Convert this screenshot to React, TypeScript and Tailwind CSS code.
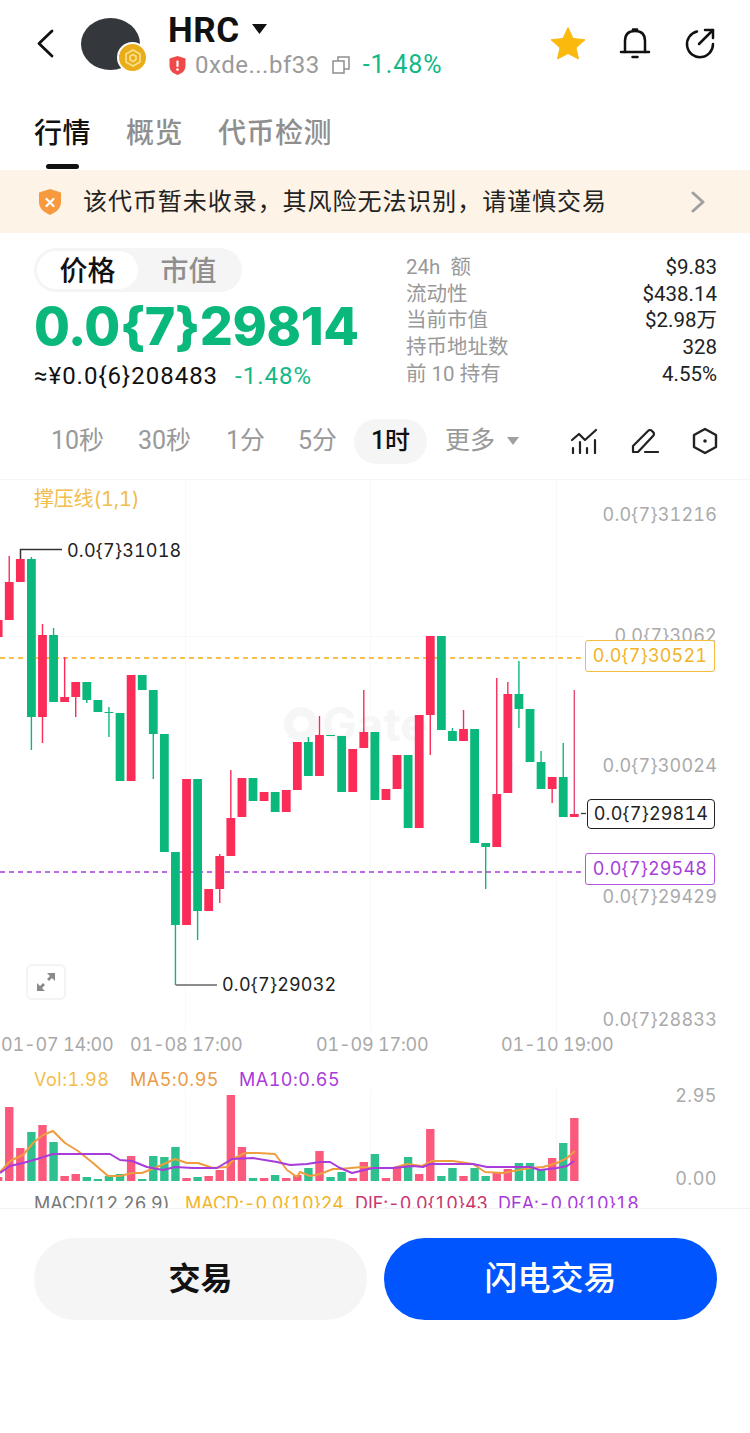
const FONT = "font-['Inter','Noto_Sans_CJK_SC',sans-serif]";

const GREEN = "#0bb87b";
const RED = "#fb2c57";

// [index, up, bodyTop, bodyBottom, wickTop, wickBottom]
const candles: [number, boolean, number, number, number?, number?][] = [
  [-3, true, 620, 637],
  [-2, true, 582, 620, 556],
  [-1, true, 559, 582],
  [0, false, 559, 717, 557, 750],
  [1, true, 635, 717, 624, 743],
  [2, false, 635, 702, 628],
  [3, true, 697, 702, 657],
  [4, true, 682, 697, undefined, 717],
  [5, false, 682, 700, undefined, 703],
  [6, false, 700, 712],
  [7, false, 712, 713, 707, 737],
  [8, false, 713, 781],
  [9, true, 675, 781],
  [10, false, 675, 690],
  [11, false, 690, 734, undefined, 779],
  [12, false, 734, 852],
  [13, false, 852, 925, undefined, 985],
  [14, true, 779, 925],
  [15, false, 779, 911, undefined, 940],
  [16, true, 889, 911],
  [17, true, 856, 889, 854, 903],
  [18, true, 818, 856, 770],
  [19, true, 778, 817],
  [20, false, 778, 801],
  [21, true, 792, 801],
  [22, false, 792, 812],
  [23, true, 790, 812],
  [24, true, 742, 790],
  [25, false, 742, 776, 737],
  [26, true, 735, 776, 716],
  [27, false, 735, 736],
  [28, false, 736, 792],
  [29, true, 749, 792],
  [30, true, 732, 748, 690],
  [31, false, 732, 800],
  [32, true, 789, 800],
  [33, true, 755, 789],
  [34, false, 755, 828],
  [35, true, 715, 828],
  [36, true, 636, 715, undefined, 755],
  [37, false, 636, 730],
  [38, false, 731, 741, 728],
  [39, true, 729, 741, 710],
  [40, false, 729, 843],
  [41, false, 843, 847, undefined, 889],
  [42, true, 794, 847, 678],
  [43, true, 694, 793, 682],
  [44, false, 694, 709, 661, 728],
  [45, false, 709, 762],
  [46, false, 762, 789, 751],
  [47, true, 777, 789, undefined, 803],
  [48, false, 777, 817, 743],
  [49, true, 814, 817, 690],
];

// [index, up, top]
const volumes: [number, boolean, number][] = [
  [-3, true, 1177], [-2, true, 1107], [-1, true, 1148], [0, false, 1132], [1, true, 1125], [2, false, 1142],
  [3, true, 1176], [4, true, 1174], [5, false, 1177], [6, false, 1179], [7, false, 1176], [8, false, 1174],
  [9, true, 1156], [10, false, 1179], [11, false, 1156], [12, false, 1157], [13, false, 1147], [14, true, 1178],
  [15, false, 1177], [16, true, 1176], [17, true, 1170], [18, true, 1095], [19, true, 1147], [20, false, 1178],
  [21, true, 1178], [22, false, 1175], [23, true, 1178], [24, true, 1175], [25, false, 1168], [26, true, 1151],
  [27, false, 1177], [28, false, 1172], [29, true, 1178], [30, true, 1162], [31, false, 1154], [32, true, 1178],
  [33, true, 1168], [34, false, 1157], [35, true, 1174], [36, true, 1129], [37, false, 1176], [38, false, 1168],
  [39, true, 1176], [40, false, 1168], [41, false, 1176], [42, true, 1172], [43, true, 1169], [44, false, 1163],
  [45, false, 1163], [46, false, 1170], [47, true, 1158], [48, false, 1143], [49, true, 1118],
];

const ma5 = "0,1172 10,1161 23,1155 33,1143 43,1135 53,1131 65,1143 78,1151 93,1163 108,1176 120,1176 132,1173 142,1173 157,1167 175,1159 187,1163 198,1163 213,1168 227,1167 235,1158 245,1153 258,1153 275,1154 287,1170 297,1177 300,1172 310,1176 320,1174 333,1169 340,1169 362,1167 373,1168 393,1168 407,1164 422,1166 432,1161 453,1161 473,1164 485,1172 503,1173 530,1168 543,1167 557,1163 567,1158 575,1151";
const ma10 = "0,1173 10,1166 23,1163 37,1159 53,1154 73,1154 110,1154 120,1160 132,1161 147,1167 163,1170 175,1167 193,1168 217,1168 232,1159 253,1158 277,1162 290,1165 307,1164 320,1162 330,1162 340,1168 352,1173 373,1168 393,1168 413,1166 423,1167 430,1164 450,1164 473,1164 487,1167 507,1167 530,1167 540,1170 557,1168 567,1166 574,1161";

function Candles() {
  return (
    <svg className="absolute left-0 top-0" width="750" height="582" viewBox="0 480 750 582">
      <line x1="185.5" y1="480" x2="185.5" y2="1030" stroke="#f8f8f8" />
      <line x1="370.5" y1="480" x2="370.5" y2="1030" stroke="#f9f9f9" />
      <line x1="556.5" y1="480" x2="556.5" y2="1030" stroke="#f7f7f7" />
      <line x1="0" y1="636.5" x2="585" y2="636.5" stroke="#f9f9f9" />
      <line x1="0" y1="658" x2="585" y2="658" stroke="#f7c04a" strokeWidth="2" strokeDasharray="5 4" />
      <line x1="0" y1="872" x2="585" y2="872" stroke="#bd6ce6" strokeWidth="2" strokeDasharray="5 4" />
      {candles.map(([i, up, top, bottom, wickTop, wickBottom]) => {
        const x = 31.4 + i * 11.08;
        const color = up ? RED : GREEN;
        return (
          <g key={i}>
            <line x1={x} x2={x} y1={wickTop ?? top} y2={wickBottom ?? bottom} stroke={i === 49 ? "#e04a72" : color} strokeWidth="1.4" />
            <rect x={x - 4.4} y={top} width="8.8" height={Math.max(bottom - top, 1)} fill={color} />
          </g>
        );
      })}
      <path d="M20.5 559V549.5H62" fill="none" stroke="#333" strokeWidth="1.5" />
      <path d="M175.7 985H217" fill="none" stroke="#666" strokeWidth="1.5" />
      <line x1="581" x2="586" y1="813.5" y2="813.5" stroke="#333" strokeWidth="1.2" />
    </svg>
  );
}

function Volumes() {
  return (
    <svg className="absolute left-0 top-0" width="750" height="146" viewBox="0 1062 750 146">
      <line x1="185.5" y1="1090" x2="185.5" y2="1181" stroke="#f8f8f8" />
      <line x1="370.5" y1="1090" x2="370.5" y2="1181" stroke="#f9f9f9" />
      <line x1="556.5" y1="1090" x2="556.5" y2="1181" stroke="#f7f7f7" />
      {volumes.map(([i, up, top]) => (
        <rect key={i} x={31.4 + i * 11.08 - 4.2} y={top} width="8.4" height={1181 - top} fill={up ? "#fb5a7d" : "#2fc08f"} />
      ))}
      <polyline points={ma5} fill="none" stroke="#ee9d3e" strokeWidth="2" strokeLinejoin="round" />
      <polyline points={ma10} fill="none" stroke="#a93bdb" strokeWidth="2" strokeLinejoin="round" />
    </svg>
  );
}

export default function App() {
  return (
    <div className={`min-h-[1433px] w-[750px] overflow-hidden bg-white ${FONT}`}>
      {/* header */}
      <header className="flex h-[96px] items-start">
        <svg className="ml-[34px] mt-[28px]" width="22" height="30" viewBox="0 0 22 30" fill="none" stroke="#111" strokeWidth="2.8" strokeLinecap="round" strokeLinejoin="round">
          <path d="M18 3 5 15.500 18 28" />
        </svg>
        <div className="relative ml-[25px] mt-[18px] h-[52px] w-[59px] rounded-[50%] bg-[#34373b]">
          <div className="absolute left-[36px] top-[24px] flex h-[31px] w-[31px] items-center justify-center rounded-full border-2 border-white bg-[#e9ad1a]">
            <svg width="20" height="20" viewBox="0 0 20 20" fill="none" stroke="#fbe08c" strokeWidth="1.600" strokeLinejoin="round">
              <path d="M10 2 17 6v8l-7 4-7-4V6z" />
              <path d="M10 6.500 13 8.300v3.400l-3 1.800-3-1.800V8.300z" />
            </svg>
          </div>
        </div>
        <div className="ml-[28px] mt-[14px] flex flex-col">
          <div className="flex items-center">
            <span className="font-['Roboto'] text-[35px] leading-[34px] font-bold text-[#111] tracking-[0.6px]">HRC</span>
            <svg className="ml-[12px] mb-[4px]" width="15" height="10" viewBox="0 0 15 10"><path d="M0 0h15L7.500 10z" fill="#111" /></svg>
          </div>
          <div className="mt-[3px] flex items-center">
            <svg className="ml-[1px]" width="17" height="19" viewBox="0 0 17 19">
              <path d="M8.500 0 16.500 2.500V10c0 4.500-3.500 7.500-8 9-4.500-1.500-8-4.500-8-9V2.500z" fill="#ef4a49" />
              <rect x="7.400" y="4.500" width="2.200" height="6.500" rx="1" fill="#fff" />
              <circle cx="8.500" cy="13.500" r="1.300" fill="#fff" />
            </svg>
            <span className="ml-[9px] font-['Roboto'] text-[24px] leading-[28px] text-[#9a9a9a] tracking-[0.5px]">0xde...bf33</span>
            <svg className="ml-[12px]" width="18" height="18" viewBox="0 0 18 18" fill="none" stroke="#8e8e8e" strokeWidth="1.500">
              <rect x="1" y="5" width="11" height="12" />
              <path d="M6 5V1h11v12h-5" />
            </svg>
            <span className="ml-[13px] font-['Roboto'] text-[25px] leading-[28px] text-[#12b886] tracking-[1px]">-1.48%</span>
          </div>
        </div>
        <div className="ml-auto mr-[34px] mt-[26px] flex items-center gap-[32px]">
          <svg width="36" height="34" viewBox="0 0 36 34"><path d="M18 1.500 23 12.500 35 13.800 26 21.800 28.500 33 18 27.500 7.500 33 10 21.800 1 13.800 13 12.500z" fill="#fbb90d" stroke="#fbb90d" strokeLinejoin="round" /></svg>
          <svg width="34" height="34" viewBox="0 0 34 34" fill="none" stroke="#111" strokeWidth="2.500" strokeLinecap="round" strokeLinejoin="round">
            <path d="M3 26h28" />
            <path d="M7 26V15C7 8 11 5 17 5s10 3 10 10v11" />
            <path d="M15 3.500h4" />
            <path d="M14.500 31h5" />
          </svg>
          <svg width="32" height="32" viewBox="0 0 32 32" fill="none" stroke="#111" strokeWidth="2.500" strokeLinecap="round" strokeLinejoin="round">
            <path d="M13 4.500A13 13 0 1 0 29 17" />
            <path d="M15 17 29 3" />
            <path d="M21 3h8v8" />
          </svg>
        </div>
      </header>

      {/* tabs */}
      <nav className="flex h-[74px] items-start pl-[34px] pt-[20px] text-[28px] leading-[34px] tracking-[0.5px]">
        <div className="relative mr-[35px] font-medium text-[#111]">
          行情
          <div className="absolute left-[12px] top-[48px] h-[5px] w-[33px] rounded-full bg-[#111]" />
        </div>
        <div className="mr-[35px] font-medium text-[#8f8f8f]">概览</div>
        <div className="font-medium text-[#8f8f8f]">代币检测</div>
      </nav>

      {/* risk banner */}
      <div className="flex h-[63px] items-center bg-[#fdf3e6] pl-[38px] pr-[44px]">
        <svg width="24" height="26" viewBox="0 0 24 26">
          <path d="M12 0 23 3.500V13c0 6-4.500 10-11 13C5.500 23 1 19 1 13V3.500z" fill="#f79a3f" />
          <path d="M8.500 10l7 7M15.500 10l-7 7" stroke="#fff" strokeWidth="2.200" strokeLinecap="round" />
        </svg>
        <span className="ml-[21px] text-[24px] leading-[30px] text-[#222] tracking-[0.95px]">该代币暂未收录，其风险无法识别，请谨慎交易</span>
        <svg className="ml-auto" width="16" height="22" viewBox="0 0 16 22" fill="none" stroke="#a0a0a0" strokeWidth="3" strokeLinecap="round" strokeLinejoin="round"><path d="M3 2l10 9-10 9" /></svg>
      </div>

      {/* price block */}
      <section className="flex h-[182px] pl-[34px] pr-[33px] pt-[15px]">
        <div className="w-[372px]">
          <div className="flex h-[44px] w-[208px] items-center rounded-full bg-[#f5f5f6] p-[3px]">
            <div className="flex h-[38px] w-[102px] items-center justify-center rounded-full bg-white pt-[2px] text-[28px] font-medium text-[#111]">价格</div>
            <div className="flex h-[38px] w-[102px] items-center justify-center pt-[2px] text-[28px] font-medium text-[#8f8f8f]">市值</div>
          </div>
          <div className="mt-[7px] font-['Inter'] text-[52px] leading-[56px] font-extrabold tracking-[-0.4px] text-[#0bb87b]">0.0{"{7}"}29814</div>
          <div className="mt-[6px] flex items-center font-['Roboto'] text-[24px] leading-[30px] tracking-[1px]">
            <span className="text-[#111]">≈¥0.0{"{6}"}208483</span>
            <span className="ml-[17px] text-[#12b886]">-1.48%</span>
          </div>
        </div>
        <div className="flex-1 pt-[6px] text-[20.500px] leading-[26.700px]">
          {[
            ["24h  额", "$9.83"],
            ["流动性", "$438.14"],
            ["当前市值", "$2.98万"],
            ["持币地址数", "328"],
            ["前 10 持有", "4.55%"],
          ].map(([label, value]) => (
            <div key={label} className="flex justify-between">
              <span className="whitespace-pre font-['Roboto','Noto_Sans_CJK_SC'] text-[#999]">{label}</span>
              <span className="font-['Roboto','Noto_Sans_CJK_SC'] text-[#222]">{value}</span>
            </div>
          ))}
        </div>
      </section>

      {/* intervals */}
      <div className="flex h-[65px] items-center border-b border-[#f5f5f5] pl-[51px] pr-[32px] pb-[12px] font-['Roboto','Noto_Sans_CJK_SC'] text-[25px] text-[#999]">
        <span className="w-[87px]">10秒</span>
        <span className="w-[88px]">30秒</span>
        <span className="w-[72px]">1分</span>
        <span className="w-[56px]">5分</span>
        <span className="flex h-[45px] w-[73px] shrink-0 items-center justify-center rounded-full bg-[#f5f5f5] font-medium text-[#111]">1时</span>
        <span className="ml-[18px]">更多</span>
        <svg className="ml-[12px]" width="12" height="8" viewBox="0 0 12 8"><path d="M0 0h12L6 8z" fill="#a0a0a0" /></svg>
        <div className="ml-auto flex items-center gap-[33px]">
          <svg width="28" height="26" viewBox="0 0 28 26" fill="none" stroke="#222" strokeWidth="2.200" strokeLinecap="round" strokeLinejoin="round">
            <path d="M2 12 9 6l6 6L26 2" />
            <path d="M3 20v5M10 14v11M17 20v5M25 12v13" />
          </svg>
          <svg width="28" height="26" viewBox="0 0 28 26" fill="none" stroke="#222" strokeWidth="2.200" strokeLinecap="round" strokeLinejoin="round">
            <path d="M2 24V18L17 3a2.500 2.500 0 0 1 4 0l1 1a2.500 2.500 0 0 1 0 4L7 24z" />
            <path d="M14 24h13" />
          </svg>
          <svg width="26" height="28" viewBox="0 0 26 28" fill="none" stroke="#222" strokeWidth="2.400" strokeLinejoin="round">
            <path d="M13 2 24 8v12l-11 6-11-6V8z" />
            <circle cx="13" cy="14" r="1.800" fill="#222" stroke="none" />
          </svg>
        </div>
      </div>

      {/* kline chart */}
      <div className="relative h-[582px] overflow-hidden text-[18px] leading-[22px] tracking-[0.2px] tabular-nums">
        <div className="absolute left-[284px] top-[219px] flex items-center gap-[4px] text-[46px] leading-[50px] font-bold text-[#f6f6f6]">
          <span className="h-[34px] w-[34px] rounded-full border-[9px] border-[#f6f6f6]" />
          <span>Gate</span>
        </div>
        <Candles />
        <span className="absolute left-[34px] top-[8px] text-[20px] tracking-[-0.2px] text-[#f2bd4a]">撑压线(1,1)</span>
        <span className="absolute left-[67px] top-[60px] text-[#222]">0.0{"{7}"}31018</span>
        <span className="absolute left-[222px] top-[494px] text-[#222]">0.0{"{7}"}29032</span>

        <span className="absolute right-[33px] top-[24px] text-[#aaa]">0.0{"{7}"}31216</span>
        <span className="absolute right-[33px] top-[145px] text-[#aaa]">0.0{"{7}"}3062</span>
        <span className="absolute right-[33px] top-[275px] text-[#aaa]">0.0{"{7}"}30024</span>
        <span className="absolute right-[33px] top-[406px] text-[#aaa]">0.0{"{7}"}29429</span>
        <span className="absolute right-[33px] top-[529px] text-[#aaa]">0.0{"{7}"}28833</span>

        <div className="absolute left-[585px] top-[160px] flex h-[32px] w-[130px] items-center justify-center rounded-[3px] border border-[#f3bc3c] bg-white text-[#f0b429]">0.0{"{7}"}30521</div>
        <div className="absolute left-[587px] top-[319px] flex h-[30px] w-[128px] items-center justify-center rounded-[4px] border border-[#222] bg-white text-[#222]">0.0{"{7}"}29814</div>
        <div className="absolute left-[585px] top-[373px] flex h-[32px] w-[130px] items-center justify-center rounded-[3px] border border-[#b455e4] bg-white text-[#a63fd9]">0.0{"{7}"}29548</div>

        <div className="absolute left-[26px] top-[484px] flex h-[36px] w-[40px] items-center justify-center rounded-[6px] border-2 border-[#f3f3f3] bg-white">
          <svg width="20" height="20" viewBox="0 0 20 20" fill="#8a8a8a">
            <path d="M11 1h8v8l-3-3-3 3-2-2 3-3z" />
            <path d="M9 19H1v-8l3 3 3-3 2 2-3 3z" />
          </svg>
        </div>

        <span className="absolute left-[1px] top-[554px] tracking-[-0.2px] text-[#a8a8a8]">01-07 14:00</span>
        <span className="absolute left-[130px] top-[554px] tracking-[-0.2px] text-[#a8a8a8]">01-08 17:00</span>
        <span className="absolute left-[316px] top-[554px] tracking-[-0.2px] text-[#a8a8a8]">01-09 17:00</span>
        <span className="absolute left-[501px] top-[554px] tracking-[-0.2px] text-[#a8a8a8]">01-10 19:00</span>
      </div>

      {/* volume + clipped macd */}
      <div className="relative h-[146px] overflow-hidden text-[18px] leading-[22px] tracking-[0.5px] tabular-nums">
        <Volumes />
        <div className="absolute left-[34px] top-[7px] flex">
          <span className="w-[96px] text-[#f2bd4a]">Vol:1.98</span>
          <span className="w-[109px] text-[#ea9c46]">MA5:0.95</span>
          <span className="text-[#a93bdb]">MA10:0.65</span>
        </div>
        <span className="absolute right-[33px] top-[23px] text-[#aaa]">2.95</span>
        <span className="absolute right-[33px] top-[106px] text-[#aaa]">0.00</span>
        <div className="absolute left-[34px] top-[131px] flex whitespace-nowrap tracking-[-0.05px]">
          <span className="w-[151px] text-[#777]">MACD(12,26,9)</span>
          <span className="w-[170px] text-[#f0b429]">MACD:-0.0{"{10}"}24</span>
          <span className="w-[143px] text-[#c8366f]">DIF:-0.0{"{10}"}43</span>
          <span className="text-[#a93bdb]">DEA:-0.0{"{10}"}18</span>
        </div>
      </div>

      {/* actions */}
      <div className="flex gap-[17px] border-t border-[#f2f2f2] pl-[34px] pr-[33px] pt-[29px]">
        <button className="flex h-[82px] flex-1 items-center justify-center rounded-full bg-[#f5f5f5] text-[32px] font-bold text-[#111]">交易</button>
        <button className="flex h-[82px] flex-1 items-center justify-center rounded-full bg-[#0055ff] text-[33px] font-medium text-white">闪电交易</button>
      </div>
    </div>
  );
}
